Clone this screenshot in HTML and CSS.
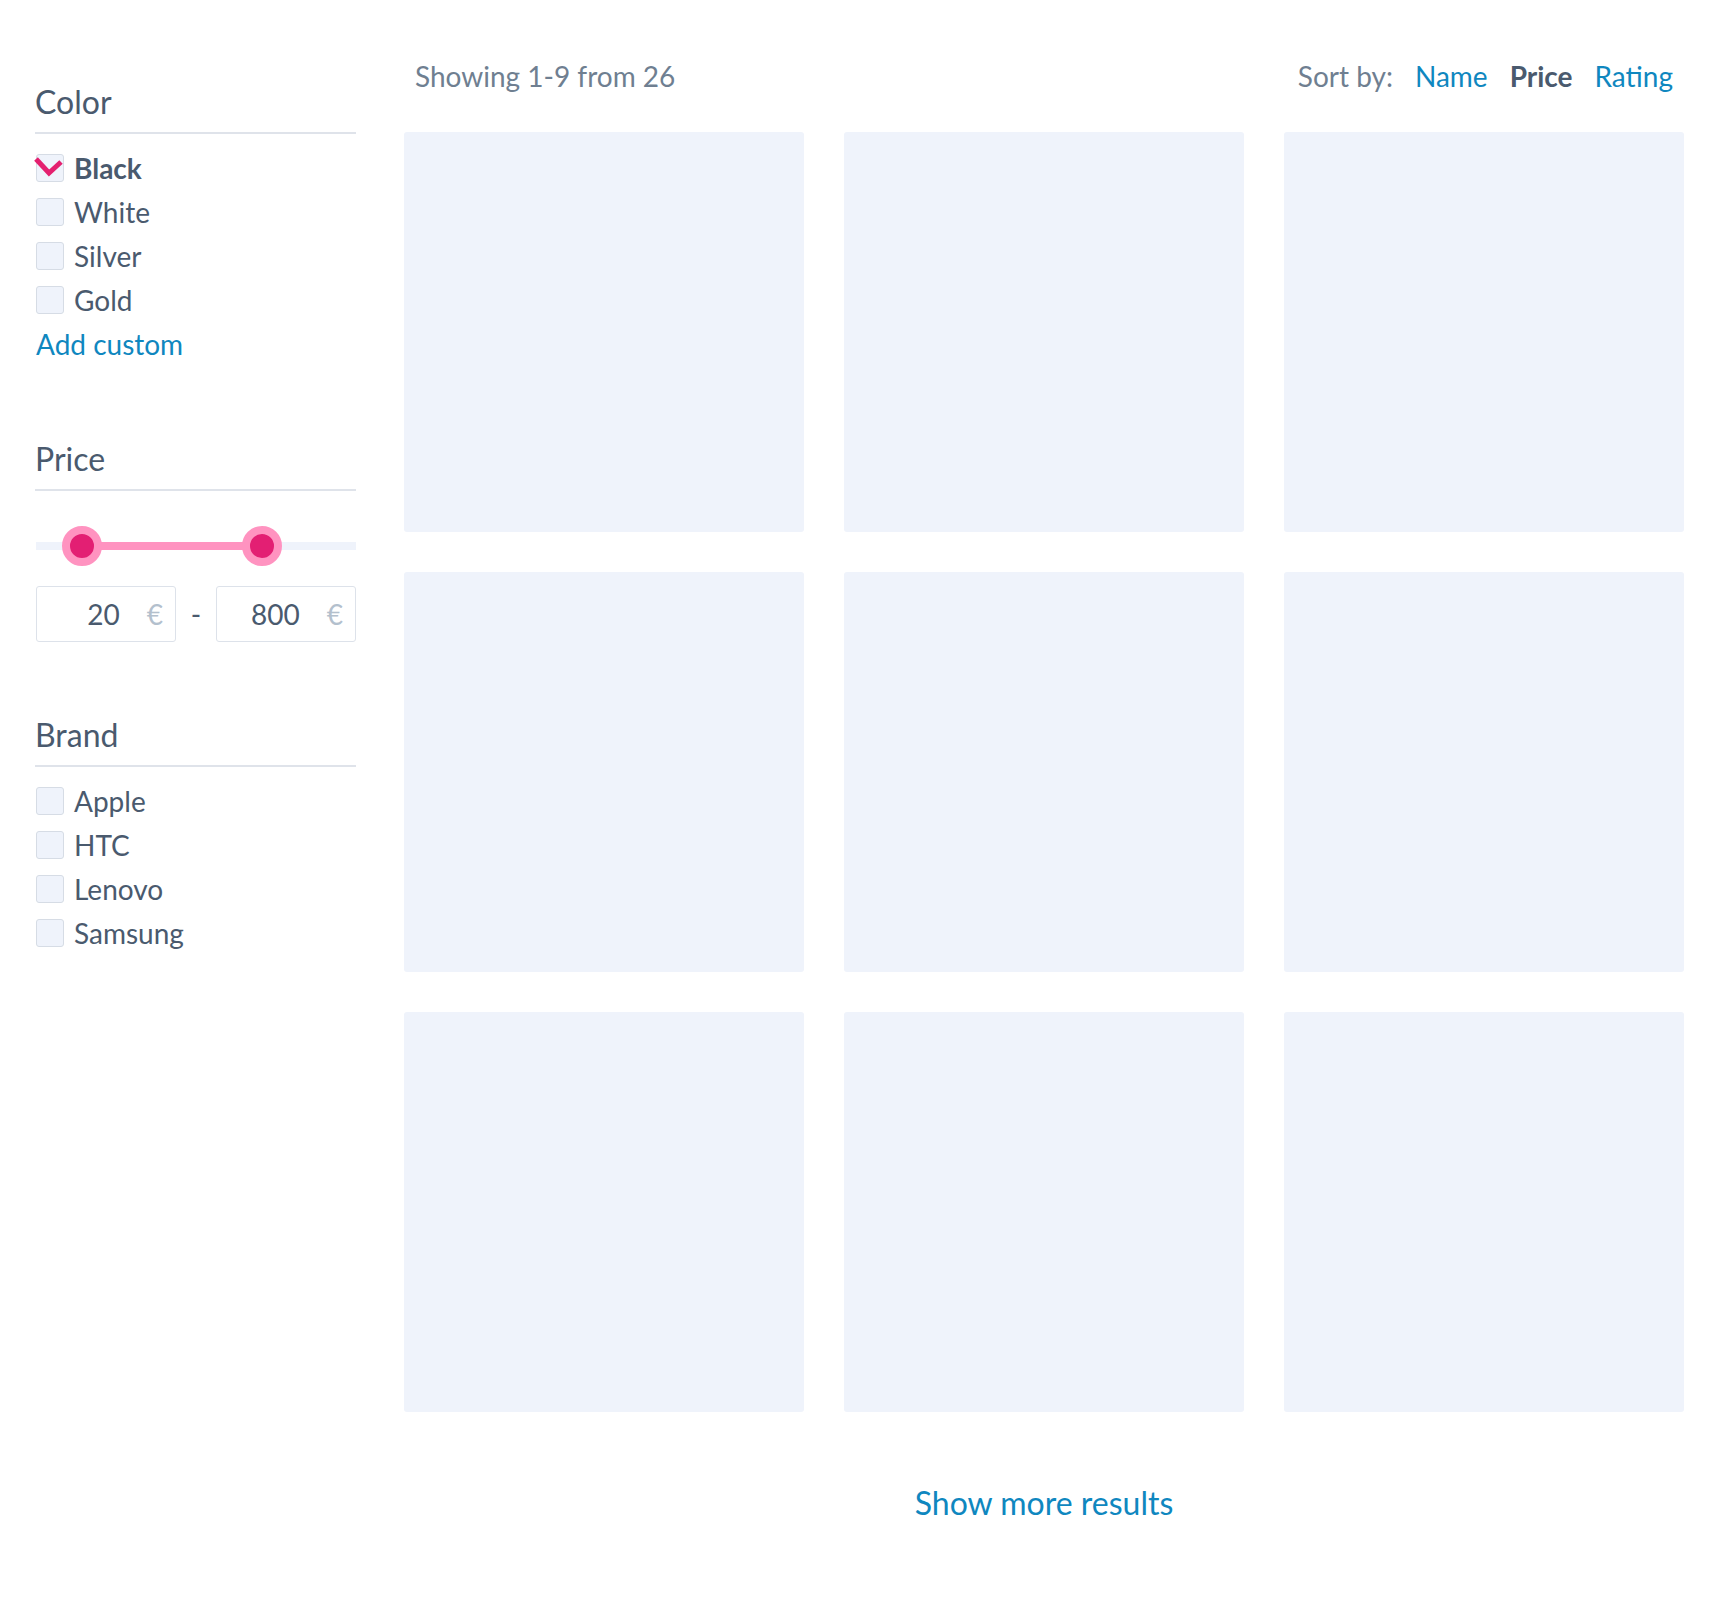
FILE: index.html
```html
<!DOCTYPE html>
<html lang="en">
<head>
  <meta charset="UTF-8">
  <title>Catalog</title>
  <link rel="stylesheet" href="styles.css">
</head>
<body>
  <div class="page">

    <!-- Filters -->
    <aside class="sidebar">
      <section class="filter">
        <h3 class="filter-title">Color</h3>
        <ul class="check-list">
          <li class="check-item checked">
            <span class="box">
              <svg class="tick" width="32" height="24" viewBox="0 0 32 24"><polyline points="2,4 15,18 27,7" fill="none" stroke="#e4206f" stroke-width="5"/></svg>
            </span>
            Black
          </li>
          <li class="check-item"><span class="box"></span>White</li>
          <li class="check-item"><span class="box"></span>Silver</li>
          <li class="check-item"><span class="box"></span>Gold</li>
          <li class="check-item"><a href="#" class="link">Add custom</a></li>
        </ul>
      </section>

      <section class="filter">
        <h3 class="filter-title">Price</h3>
        <div class="slider">
          <div class="slider-track"></div>
          <div class="slider-range" style="left: 46px; width: 180px;"></div>
          <span class="thumb" style="left: 26px;"></span>
          <span class="thumb" style="left: 206px;"></span>
        </div>
        <div class="price-inputs">
          <div class="price-box"><span class="val">20</span><span class="cur">€</span></div>
          <span class="dash">-</span>
          <div class="price-box"><span class="val">800</span><span class="cur">€</span></div>
        </div>
      </section>

      <section class="filter">
        <h3 class="filter-title">Brand</h3>
        <ul class="check-list">
          <li class="check-item"><span class="box"></span>Apple</li>
          <li class="check-item"><span class="box"></span>HTC</li>
          <li class="check-item"><span class="box"></span>Lenovo</li>
          <li class="check-item"><span class="box"></span>Samsung</li>
        </ul>
      </section>
    </aside>

    <!-- Results -->
    <main class="results">
      <div class="results-bar">
        <span class="count">Showing 1-9 from 26</span>
        <div class="sort">
          <span class="sort-label">Sort by:</span>
          <a href="#" class="link">Name</a>
          <span class="sort-active">Price</span>
          <a href="#" class="link">Rating</a>
        </div>
      </div>

      <div class="grid">
        <div class="card"></div>
        <div class="card"></div>
        <div class="card"></div>
        <div class="card"></div>
        <div class="card"></div>
        <div class="card"></div>
        <div class="card"></div>
        <div class="card"></div>
        <div class="card"></div>
      </div>

      <div class="more">
        <a href="#" class="link">Show more results</a>
      </div>
    </main>

  </div>
</body>
</html>
```

FILE: styles.css
```css
/* Base */
* { margin: 0; padding: 0; box-sizing: border-box; }
body { font-family: Lato, "Open Sans", sans-serif; background: #fff; color: #4a5a6e; }
a { text-decoration: none; color: inherit; }
ul { list-style: none; }

.link { color: #0f87bf; }

.page {
  display: flex;
  gap: 48px;
  padding: 0 36px;
}

/* Sidebar */
.sidebar {
  width: 320px;
  flex-shrink: 0;
  padding-top: 84px;
}
.filter { margin-bottom: 75px; }
.filter-title {
  font-size: 32px;
  font-weight: 400;
  line-height: 36px;
  padding-bottom: 12px;
  margin-left: -1px;
  border-bottom: 2px solid #dfe3ea;
}
.check-list { margin-top: 12px; }
.check-item {
  display: flex;
  align-items: center;
  height: 44px;
  font-size: 28px;
  line-height: 44px;
}
.check-item.checked { font-weight: 700; }
.box {
  position: relative;
  width: 28px;
  height: 28px;
  margin-right: 10px;
  background: #eff3fb;
  border: 1px solid #d6dce5;
  border-radius: 3px;
  flex-shrink: 0;
}
.tick {
  position: absolute;
  left: -3px;
  top: 0;
}

/* Price slider */
.slider {
  position: relative;
  height: 40px;
  margin-top: 35px;
}
.slider-track {
  position: absolute;
  left: 0;
  right: 0;
  top: 16px;
  height: 8px;
  background: #eff3fb;
}
.slider-range {
  position: absolute;
  top: 16px;
  height: 8px;
  background: #ff93c0;
}
.thumb {
  position: absolute;
  top: 0;
  width: 40px;
  height: 40px;
  border-radius: 50%;
  background: #e31f73;
  border: 8px solid #ff93c0;
}
.price-inputs {
  display: flex;
  align-items: center;
  justify-content: space-between;
  margin-top: 20px;
}
.price-box {
  display: flex;
  justify-content: flex-end;
  align-items: baseline;
  width: 140px;
  height: 56px;
  padding: 8px 12px 4px 0;
  border: 1px solid #dde2ea;
  border-radius: 3px;
  font-size: 28px;
  line-height: 38px;
}
.cur { color: #b3c0cd; margin-left: 27px; }
.dash { font-size: 28px; }

/* Results */
.results { flex: 1; padding-top: 60px; }
.results-bar {
  display: flex;
  justify-content: space-between;
  align-items: center;
  height: 32px;
  padding: 0 11px;
  margin-bottom: 40px;
  font-size: 28px;
  line-height: 32px;
}
.count, .sort-label { color: #6f7f91; }
.sort { display: flex; gap: 22px; }
.sort-active { font-weight: 700; color: #4a5a6e; }

.grid {
  display: grid;
  grid-template-columns: repeat(3, 400px);
  grid-auto-rows: 400px;
  gap: 40px;
}
.card {
  background: #eff3fb;
  border-radius: 3px;
}

.more {
  text-align: center;
  margin-top: 71px;
  font-size: 32px;
  line-height: 40px;
}
```
